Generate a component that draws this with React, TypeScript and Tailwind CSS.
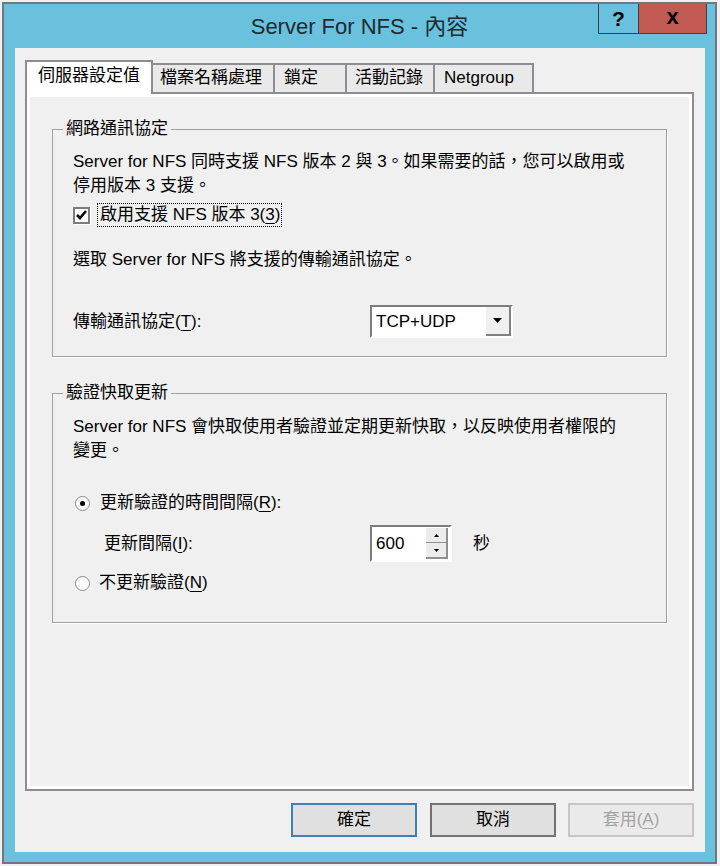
function Mn({ c }: { c: string }) {
  return <span className="underline underline-offset-[3px]">{c}</span>;
}

function Radio({ checked }: { checked?: boolean }) {
  return (
    <span className="ml-[2px] flex h-[15px] w-[15px] items-center justify-center rounded-full border border-[#8a8a8a] bg-white">
      {checked && <span className="h-[5px] w-[5px] rounded-full bg-black" />}
    </span>
  );
}

function Arrow({ w, h }: { w: number; h: number }) {
  return (
    <svg width={w} height={h} viewBox={`0 0 ${w} ${h}`}>
      <path d={`M0 0H${w}L${w / 2} ${h}Z`} fill="#000" />
    </svg>
  );
}

const tabs = [
  { label: "檔案名稱處理", w: "w-[122px]", pl: "pl-[7px]" },
  { label: "鎖定", w: "w-[72px]", pl: "pl-[9px]" },
  { label: "活動記錄", w: "w-[88px]", pl: "pl-[8px]" },
  { label: "Netgroup", w: "w-[99px]", pl: "pl-[9px]" },
];

export default function App() {
  return (
    <div className="h-[866px] w-[720px] bg-[#f0f0f0] pl-[2px] pt-[2px] font-['Liberation_Sans','Noto_Sans_CJK_TC',sans-serif] text-[17px] leading-[24px] text-black">
      <div className="flex h-[862px] w-[715px] flex-col border-2 border-[#72777e] bg-[#6ac1de]">
        {/* title bar */}
        <div className="relative flex h-[44px] shrink-0 items-center justify-center">
          <span className="pt-[1px] text-[22px] leading-[28px] text-[#1e2a30]">Server For NFS - 內容</span>
          <div className="absolute right-[8px] top-0 flex h-[30px] border border-t-0 border-[#3e3e3e]">
            <div className="flex w-[40px] items-center justify-center border-r border-[#3e3e3e] text-[21px] font-bold leading-none">
              ?
            </div>
            <div className="flex w-[67px] items-center justify-center bg-[#c15a52] pb-[3px] text-[22px] font-bold leading-none">
              x
            </div>
          </div>
        </div>

        {/* client */}
        <div className="mb-[10px] ml-[11px] mr-[10px] flex flex-1 flex-col bg-[#f0f0f0] pl-[10px] pr-[11px] pt-[12px]">
          <div className="flex h-[32px] items-end">
            <div className="relative z-10 -mb-[2px] h-[34px] w-[128px] border-2 border-b-0 border-[#8b8d93] bg-white pl-[11px] pt-[2px]">
              伺服器設定值
            </div>
            {tabs.map((t) => (
              <div
                key={t.label}
                className={`h-[29px] border-r-2 border-t-2 border-[#8b8d93] bg-[#e9e9e9] pt-[1px] ${t.w} ${t.pl}`}
              >
                {t.label}
              </div>
            ))}
          </div>

          <div className="h-[699px] border-2 border-[#8b8d93] bg-white p-[3px]">
            <div className="h-full bg-[#f0f0f0] px-[22px] pt-[22px]">
              <fieldset className="border border-[#a0a0a0] shadow-[1px_1px_0_#ffffff]">
                <legend className="ml-[10px] px-[3px] leading-[20px]">網路通訊協定</legend>
                <div className="pb-[18px] pl-[20px] pt-[11px]">
                  <p className="whitespace-nowrap">
                    Server for NFS 同時支援 NFS 版本 2 與 3。如果需要的話，您可以啟用或
                    <br />
                    停用版本 3 支援。
                  </p>
                  <div className="mt-[5px] flex h-[24px] items-center">
                    <span className="flex h-[17px] w-[17px] items-center justify-center border-2 border-[#7c7c7c] bg-white shadow-[1px_1px_0_#ffffff]">
                      <svg width="11" height="10" viewBox="0 0 11 10">
                        <path d="M1 5l3 3l6-7" fill="none" stroke="#000" strokeWidth="2.6" />
                      </svg>
                    </span>
                    <span className="ml-[7px] border border-dotted border-black pl-[2px] pr-[1px] leading-[22px]">
                      啟用支援 NFS 版本 3(<Mn c="3" />)
                    </span>
                  </div>
                  <p className="mt-[21px]">選取 Server for NFS 將支援的傳輸通訊協定。</p>
                  <div className="mt-[33px] flex items-center">
                    <span className="w-[297px]">
                      傳輸通訊協定(<Mn c="T" />):
                    </span>
                    <div className="flex h-[33px] w-[143px] border-2 border-b-white border-l-[#7d7d7d] border-r-white border-t-[#7d7d7d]">
                      <div className="flex flex-1 items-center bg-white pl-[4px]">TCP+UDP</div>
                      <div className="flex w-[25px] items-center justify-center border-b-2 border-r-2 border-[#808080] bg-[#f0f0f0]">
                        <Arrow w={9} h={5} />
                      </div>
                    </div>
                  </div>
                </div>
              </fieldset>

              <fieldset className="mt-[26px] border border-[#a0a0a0] shadow-[1px_1px_0_#ffffff]">
                <legend className="ml-[10px] px-[3px] leading-[20px]">驗證快取更新</legend>
                <div className="pb-[27px] pl-[20px] pt-[12px]">
                  <p className="whitespace-nowrap">
                    Server for NFS 會快取使用者驗證並定期更新快取，以反映使用者權限的
                    <br />
                    變更。
                  </p>
                  <div className="mt-[28px] flex h-[24px] items-center">
                    <Radio checked />
                    <span className="ml-[10px]">
                      更新驗證的時間間隔(<Mn c="R" />):
                    </span>
                  </div>
                  <div className="mt-[10px] flex items-center">
                    <span className="w-[297px] pl-[31px]">
                      更新間隔(<Mn c="I" />):
                    </span>
                    <div className="flex h-[37px] w-[82px] border-2 border-b-white border-l-[#7d7d7d] border-r-white border-t-[#7d7d7d] bg-white">
                      <div className="flex flex-1 items-center pl-[4px]">600</div>
                      <div className="my-[1px] mr-[2px] flex w-[22px] flex-col">
                        <div className="flex flex-1 items-center justify-center border-b border-r-2 border-[#909090] bg-[#ececec]">
                          <svg width="5" height="3" viewBox="0 0 5 3">
                            <path d="M0 3H5L2.5 0Z" fill="#000" />
                          </svg>
                        </div>
                        <div className="flex flex-1 items-center justify-center border-b-2 border-r-2 border-[#909090] bg-[#ececec]">
                          <Arrow w={5} h={3} />
                        </div>
                      </div>
                    </div>
                    <span className="ml-[21px]">秒</span>
                  </div>
                  <div className="mt-[9px] flex h-[24px] items-center">
                    <Radio />
                    <span className="ml-[9px]">
                      不更新驗證(<Mn c="N" />)
                    </span>
                  </div>
                </div>
              </fieldset>
            </div>
          </div>

          <div className="mt-[12px] flex justify-end gap-[12px]">
            <button className="h-[34px] w-[126px] border-2 border-[#3f7fb3] bg-[#e0e0e0] text-[17px]">確定</button>
            <button className="ml-[1px] h-[34px] w-[126px] border-2 border-[#727272] bg-[#e0e0e0] text-[17px]">取消</button>
            <button className="h-[34px] w-[126px] border-2 border-[#c6c6c6] bg-[#eaeaea] text-[17px] text-[#a3a3a3]">
              套用(<Mn c="A" />)
            </button>
          </div>
        </div>
      </div>
    </div>
  );
}
